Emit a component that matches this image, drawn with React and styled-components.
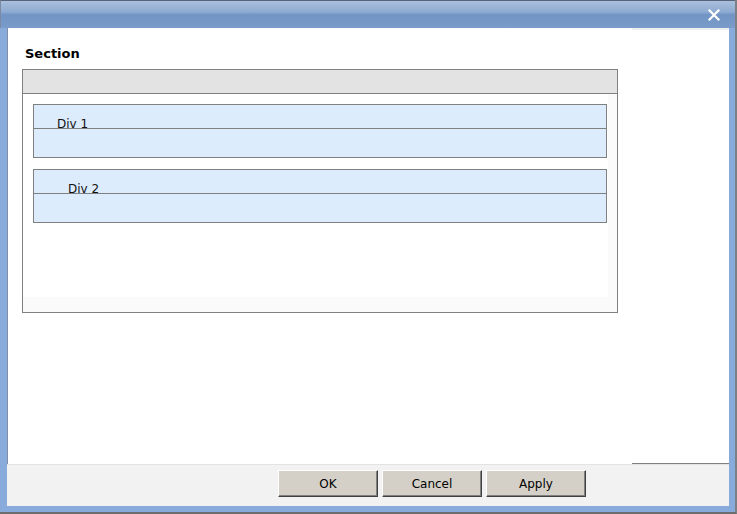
import React from 'react'
import styled, { createGlobalStyle } from 'styled-components'

const Global = createGlobalStyle`
    html, body {
        margin: 0;
        padding: 0;
        background: #5e6b7e;
    }
    body {
        font-family: "DejaVu Sans", Verdana, sans-serif;
    }
`;

export const Window = styled.div`
    width: 737px;
    height: 514px;
    box-sizing: border-box;
    display: flex;
    flex-direction: column;
    border-right: 2px solid #7b7f86;
    border-bottom: 2px solid #6d6d6d;
    background: #88abdc;
`;

export const TitleBar = styled.div`
    height: 28px;
    flex: none;
    box-sizing: border-box;
    border-top: 1px solid #56637a;
    border-left: 1px solid #7c8ba3;
    background: linear-gradient(#a9bfdc 0%, #8eabd2 40%, #7094c4 52%, #7a9cca 100%);
    display: flex;
    align-items: center;
    justify-content: flex-end;
    padding-right: 14px;
`;

export const Close = styled.div`
    width: 14px;
    height: 14px;
    display: flex;
    align-items: center;
    justify-content: center;
    cursor: pointer;
`;

export const Frame = styled.div`
    flex: 1;
    min-height: 0;
    display: flex;
    flex-direction: column;
    border-left: 7px solid #88abdc;
    border-right: 6px solid #88abdc;
    border-bottom: 6px solid #88abdc;
    box-shadow: inset 1px 0 0 #7f8fa6;
    background: #fff;
`;

export const Main = styled.div`
    flex: 1;
    position: relative;
    padding: 18px 0 0 15px;
    &::before {
        content: '';
        position: absolute;
        top: 0;
        right: 0;
        width: 97px;
        height: 2px;
        background: #f0f0f0;
    }
`;

export const SectionTitle = styled.div`
    font-weight: 700;
    font-size: 13px;
    line-height: 16px;
    color: #000;
    padding-left: 3px;
    margin-bottom: 7px;
`;

export const Box = styled.div`
    width: 596px;
    height: 244px;
    box-sizing: border-box;
    border: 1px solid #808080;
    display: flex;
    flex-direction: column;
    background: #fafafa;
`;

export const BoxHeader = styled.div`
    height: 24px;
    flex: none;
    box-sizing: border-box;
    background: #e3e3e3;
    border-bottom: 1px solid #808080;
`;

export const BoxInner = styled.div`
    height: 203px;
    margin-right: 9px;
    background: #fff;
    box-sizing: border-box;
    padding: 10px 0 0 10px;
    display: flex;
    flex-direction: column;
    gap: 11px;
`;

export const Panel = styled.div`
    width: 574px;
    height: 54px;
    box-sizing: border-box;
    border: 1px solid #808080;
    background: #ddecfd;
    display: flex;
    flex-direction: column;
`;

export const PanelHead = styled.div`
    height: 24px;
    flex: none;
    box-sizing: border-box;
    border-bottom: 1px solid #808080;
    padding-left: ${p => p.indent}px;
`;

export const PanelLabel = styled.div`
    font-size: 12px;
    line-height: 14px;
    color: #111;
    padding-top: 12px;
`;

export const Footer = styled.div`
    height: 42px;
    flex: none;
    box-sizing: border-box;
    position: relative;
    background: #f2f2f2;
    border-top: 1px solid #e3e3e3;
    display: flex;
    justify-content: flex-end;
    align-items: flex-start;
    padding: 5px 143px 0 0;
    gap: 4px;
    &::after {
        content: '';
        position: absolute;
        top: -2px;
        right: 0;
        width: 97px;
        height: 1px;
        background: #808080;
    }
`;

export const Button = styled.button`
    width: 100px;
    height: 27px;
    box-sizing: border-box;
    background: #d4d0c8;
    border: 1px solid;
    border-color: #ffffff #404040 #404040 #ffffff;
    box-shadow: inset -1px -1px 0 #808080;
    font-family: "DejaVu Sans", Verdana, sans-serif;
    font-size: 12px;
    color: #000;
    padding: 0;
    cursor: pointer;
`;

const panels = [
    { label: 'Div 1', indent: 23 },
    { label: 'Div 2', indent: 34 },
]

export default function App() {
    return (
        <>
            <Global />
            <Window>
                <TitleBar>
                    <Close>
                        <svg width="12" height="12" viewBox="0 0 12 12">
                            <path d="M1.5 1.5 L10.5 10.5 M10.5 1.5 L1.5 10.5" stroke="#fff" strokeWidth="2.2" strokeLinecap="square" />
                        </svg>
                    </Close>
                </TitleBar>
                <Frame>
                    <Main>
                        <SectionTitle>Section</SectionTitle>
                        <Box>
                            <BoxHeader />
                            <BoxInner>
                                {panels.map(p => (
                                    <Panel key={p.label}>
                                        <PanelHead indent={p.indent}>
                                            <PanelLabel>{p.label}</PanelLabel>
                                        </PanelHead>
                                    </Panel>
                                ))}
                            </BoxInner>
                        </Box>
                    </Main>
                    <Footer>
                        <Button>OK</Button>
                        <Button>Cancel</Button>
                        <Button>Apply</Button>
                    </Footer>
                </Frame>
            </Window>
        </>
    )
}
